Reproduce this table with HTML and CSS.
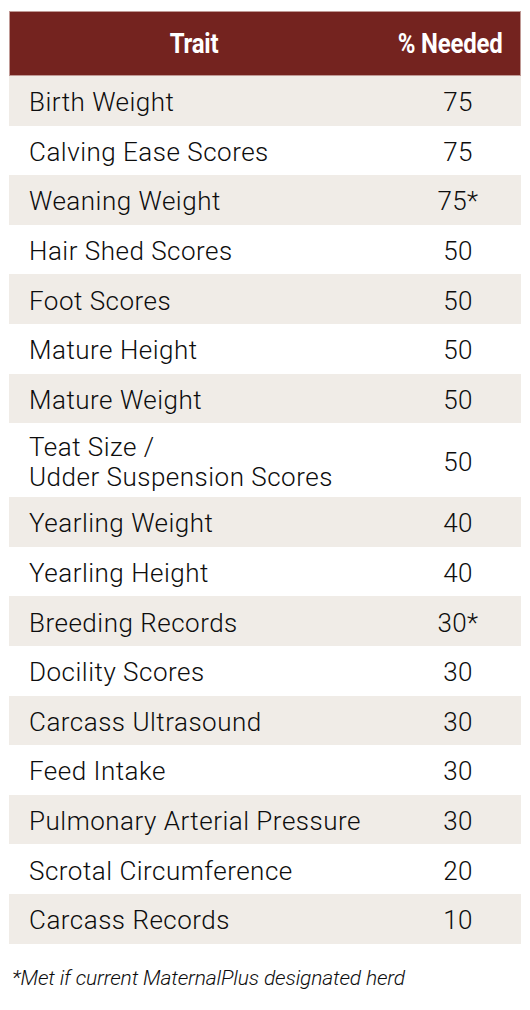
FILE: index.html
```html
<!DOCTYPE html>
<html>
<head>
<meta charset="utf-8">
<link rel="stylesheet" href="styles.css">
</head>
<body>
<table class="traits">
  <thead>
    <tr><th class="c1"><span class="hd">Trait</span></th><th class="c2"><span class="hd">% Needed</span></th></tr>
  </thead>
  <tbody>
    <tr><td>Birth Weight</td><td class="num">75</td></tr>
    <tr><td>Calving Ease Scores</td><td class="num">75</td></tr>
    <tr><td>Weaning Weight</td><td class="num">75*</td></tr>
    <tr><td>Hair Shed Scores</td><td class="num">50</td></tr>
    <tr><td>Foot Scores</td><td class="num">50</td></tr>
    <tr><td>Mature Height</td><td class="num">50</td></tr>
    <tr><td>Mature Weight</td><td class="num">50</td></tr>
    <tr class="tall"><td>Teat Size /<br>Udder Suspension Scores</td><td class="num">50</td></tr>
    <tr><td>Yearling Weight</td><td class="num">40</td></tr>
    <tr><td>Yearling Height</td><td class="num">40</td></tr>
    <tr><td>Breeding Records</td><td class="num">30*</td></tr>
    <tr><td>Docility Scores</td><td class="num">30</td></tr>
    <tr><td>Carcass Ultrasound</td><td class="num">30</td></tr>
    <tr><td>Feed Intake</td><td class="num">30</td></tr>
    <tr><td>Pulmonary Arterial Pressure</td><td class="num">30</td></tr>
    <tr><td>Scrotal Circumference</td><td class="num">20</td></tr>
    <tr><td>Carcass Records</td><td class="num">10</td></tr>
  </tbody>
</table>
<p class="note">*Met if current MaternalPlus designated herd</p>
</body>
</html>
```
FILE: styles.css
```css
html, body {
  margin: 0;
  padding: 0;
  background: #ffffff;
}
body {
  padding: 11px 9px 0 9px;
  font-family: Roboto, "Liberation Sans", sans-serif;
  color: #0d0d0d;
}
.traits {
  width: 512px;
  border-collapse: collapse;
  table-layout: fixed;
}
.traits thead tr {
  outline: 1px solid #c09995;
  outline-offset: -1px;
}
.traits th {
  background: #74231f;
  color: #ffffff;
  height: 65px;
  padding: 0;
  font-weight: 700;
  font-size: 27.5px;
  text-align: center;
  vertical-align: middle;
}
.traits .c1 { width: 370px; }
.hd {
  display: inline-block;
  transform: scaleX(0.87);
  letter-spacing: -0.2px;
}
.traits td {
  box-sizing: border-box;
  height: 49.6px;
  padding: 3px 0 0 20px;
  font-size: 26px;
  font-weight: 300;
  letter-spacing: 0.5px;
  line-height: 30px;
  vertical-align: middle;
}
.traits tr.tall td { height: 74px; }
.traits td.num {
  text-align: center;
  letter-spacing: 0.3px;
  padding: 3px 0 0 16px;
}
.traits tbody tr:nth-child(odd) td {
  background: #f0ece7;
}
.note {
  margin: 22px 0 0 3px;
  font-size: 21px;
  font-weight: 300;
  font-style: italic;
  letter-spacing: -0.15px;
}
```
